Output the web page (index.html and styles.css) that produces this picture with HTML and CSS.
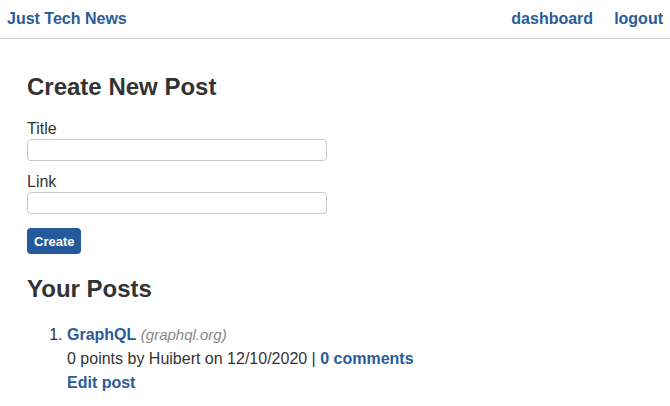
FILE: index.html
```html
<!DOCTYPE html>
<html>
<head>
<meta charset="utf-8">
<link rel="stylesheet" href="styles.css">
</head>
<body>
<header class="topbar">
  <a class="brand" href="#">Just Tech News</a>
  <nav class="nav">
    <a href="#">dashboard</a>
    <a href="#">logout</a>
  </nav>
</header>
<main class="main">
  <h2 class="heading">Create New Post</h2>
  <form class="form">
    <label class="label">Title</label>
    <input class="input" type="text">
    <label class="label">Link</label>
    <input class="input" type="text">
    <button class="btn" type="button">Create</button>
  </form>
  <h2 class="heading posts-heading">Your Posts</h2>
  <ol class="posts">
    <li>
      <a class="post-title" href="#">GraphQL</a> <span class="domain">(graphql.org)</span>
      <div class="meta">0 points by Huibert on 12/10/2020 | <a href="#">0 comments</a></div>
      <a class="edit" href="#">Edit post</a>
    </li>
  </ol>
</main>
</body>
</html>
```
FILE: styles.css
```css
* { box-sizing: border-box; }
body {
  margin: 0;
  font-family: "Liberation Sans", Arial, sans-serif;
  font-size: 16px;
  color: #333;
  background: #fff;
}
a { color: #2a5c99; font-weight: bold; text-decoration: none; }
.topbar {
  display: flex;
  justify-content: space-between;
  align-items: center;
  height: 39px;
  padding: 0 7px 1px 7px;
  border-bottom: 1px solid #cfcfcf;
}
.nav { display: flex; gap: 21px; }
.main { padding: 0 27px; }
.heading {
  font-size: 24px;
  margin: 34px 0 0 0;
  line-height: 28px;
  color: #333;
}
.form { display: flex; flex-direction: column; align-items: flex-start; margin-top: 18px; }
.label { line-height: 20px; }
.input {
  width: 300px;
  height: 22px;
  border: 1px solid #c8c8c8;
  border-radius: 4px;
  margin: 0 0 11px 0;
}
.btn {
  margin-top: 3px;
  background: #245a9c;
  color: #fff;
  font-family: "Liberation Sans", Arial, sans-serif;
  font-weight: bold;
  font-size: 13px;
  border: none;
  border-radius: 4px;
  height: 26px;
  padding: 0 7px;
}
.posts-heading { margin-top: 21px; }
.posts {
  margin: 20px 0 0 0;
  padding-left: 40px;
  line-height: 24px;
}
.domain { font-style: italic; color: #888; font-size: 15px; }
.edit { display: inline-block; }
```
